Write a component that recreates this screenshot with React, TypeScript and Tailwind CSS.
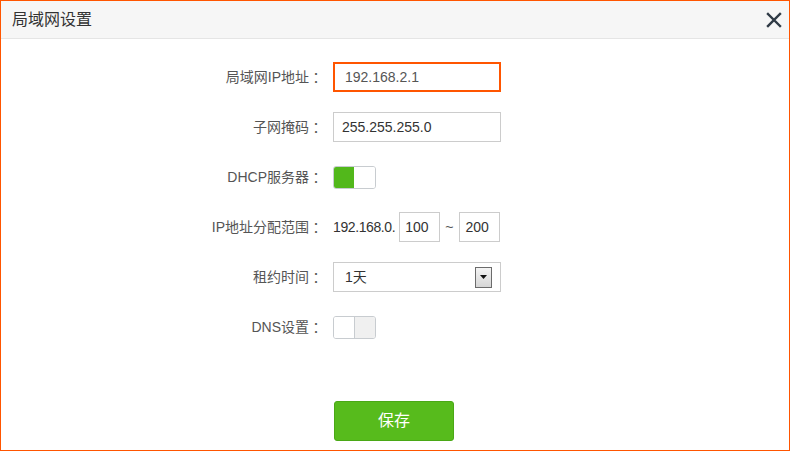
import React from "react";

const font = { fontFamily: '"Liberation Sans", "Noto Sans CJK SC", sans-serif' };

function Row({ label, children }: { label: string; children: React.ReactNode }) {
  return (
    <div className="flex items-center h-[30px]">
      <div className="w-[308px] text-right text-[14px] text-[#555] shrink-0">{label}</div>
      <span
        className="w-[14px] text-center text-[14px] text-[#555] shrink-0"
        style={{ fontFamily: '"Noto Sans CJK TC", sans-serif' }}
      >
        ：
      </span>
      <div className="ml-[10px] flex items-center">{children}</div>
    </div>
  );
}

export default function App() {
  return (
    <div className="w-[790px] h-[451px] border border-[#ff5500] bg-white flex flex-col" style={font}>
      <div className="h-[38px] bg-[#f6f6f6] border-b border-[#e5e5e5] flex items-center justify-between pl-[11px] pr-[7px] shrink-0">
        <span className="text-[16px] text-[#333]">局域网设置</span>
        <svg width="16" height="16" viewBox="0 0 16 16" className="mt-[1px]">
          <path d="M2 2 L14 14 M14 2 L2 14" stroke="#2f3a45" strokeWidth="2.4" strokeLinecap="square" />
        </svg>
      </div>
      <div className="flex flex-col gap-[20px] pt-[23px]">
        <Row label="局域网IP地址">
          <div className="w-[168px] h-[30px] border-2 border-[#ff5500] flex items-center pl-[10px] text-[14px] text-[#555]">
            192.168.2.1
          </div>
        </Row>
        <Row label="子网掩码">
          <div className="w-[168px] h-[30px] border border-[#ccc] flex items-center pl-[8px] text-[14px] text-[#333]">
            255.255.255.0
          </div>
        </Row>
        <Row label="DHCP服务器">
          <div className="w-[43px] h-[23px] border border-[#c8ccd0] rounded-[3px] flex overflow-hidden">
            <div className="w-[20px] h-full bg-[#52b81b]" />
            <div className="flex-1 h-full bg-white" />
          </div>
        </Row>
        <Row label="IP地址分配范围">
          <span className="text-[14px] tracking-[-0.4px] text-[#333]">192.168.0.</span>
          <div className="ml-[4px] w-[41px] h-[30px] border border-[#ccc] flex items-center pl-[5px] text-[14px] text-[#333]">100</div>
          <span className="ml-[5px] mr-[6px] text-[14px] text-[#555]">~</span>
          <div className="w-[41px] h-[30px] border border-[#ccc] flex items-center pl-[5px] text-[14px] text-[#333]">200</div>
        </Row>
        <Row label="租约时间">
          <div className="w-[168px] h-[30px] border border-[#ccc] flex items-center justify-between pl-[11px] pr-[8px] text-[14px] text-[#333]">
            <span>1天</span>
            <div className="w-[17px] h-[21px] border border-[#6b6b6b] bg-gradient-to-b from-[#f4f4f4] to-[#d6d6d6] flex items-center justify-center">
              <svg width="7" height="4" viewBox="0 0 7 4">
                <path d="M0 0 H7 L3.5 4 Z" fill="#111" />
              </svg>
            </div>
          </div>
        </Row>
        <Row label="DNS设置">
          <div className="w-[43px] h-[23px] border border-[#c8ccd0] rounded-[3px] flex overflow-hidden">
            <div className="w-[21px] h-full bg-white border-r border-[#c8ccd0]" />
            <div className="flex-1 h-full bg-[#f0f0f0]" />
          </div>
        </Row>
      </div>
      <div className="mt-[59px] pl-[333px]">
        <button className="w-[120px] h-[40px] rounded-[3px] bg-[#57bb1c] border border-[#4aa816] text-white text-[16px]">
          保存
        </button>
      </div>
    </div>
  );
}
